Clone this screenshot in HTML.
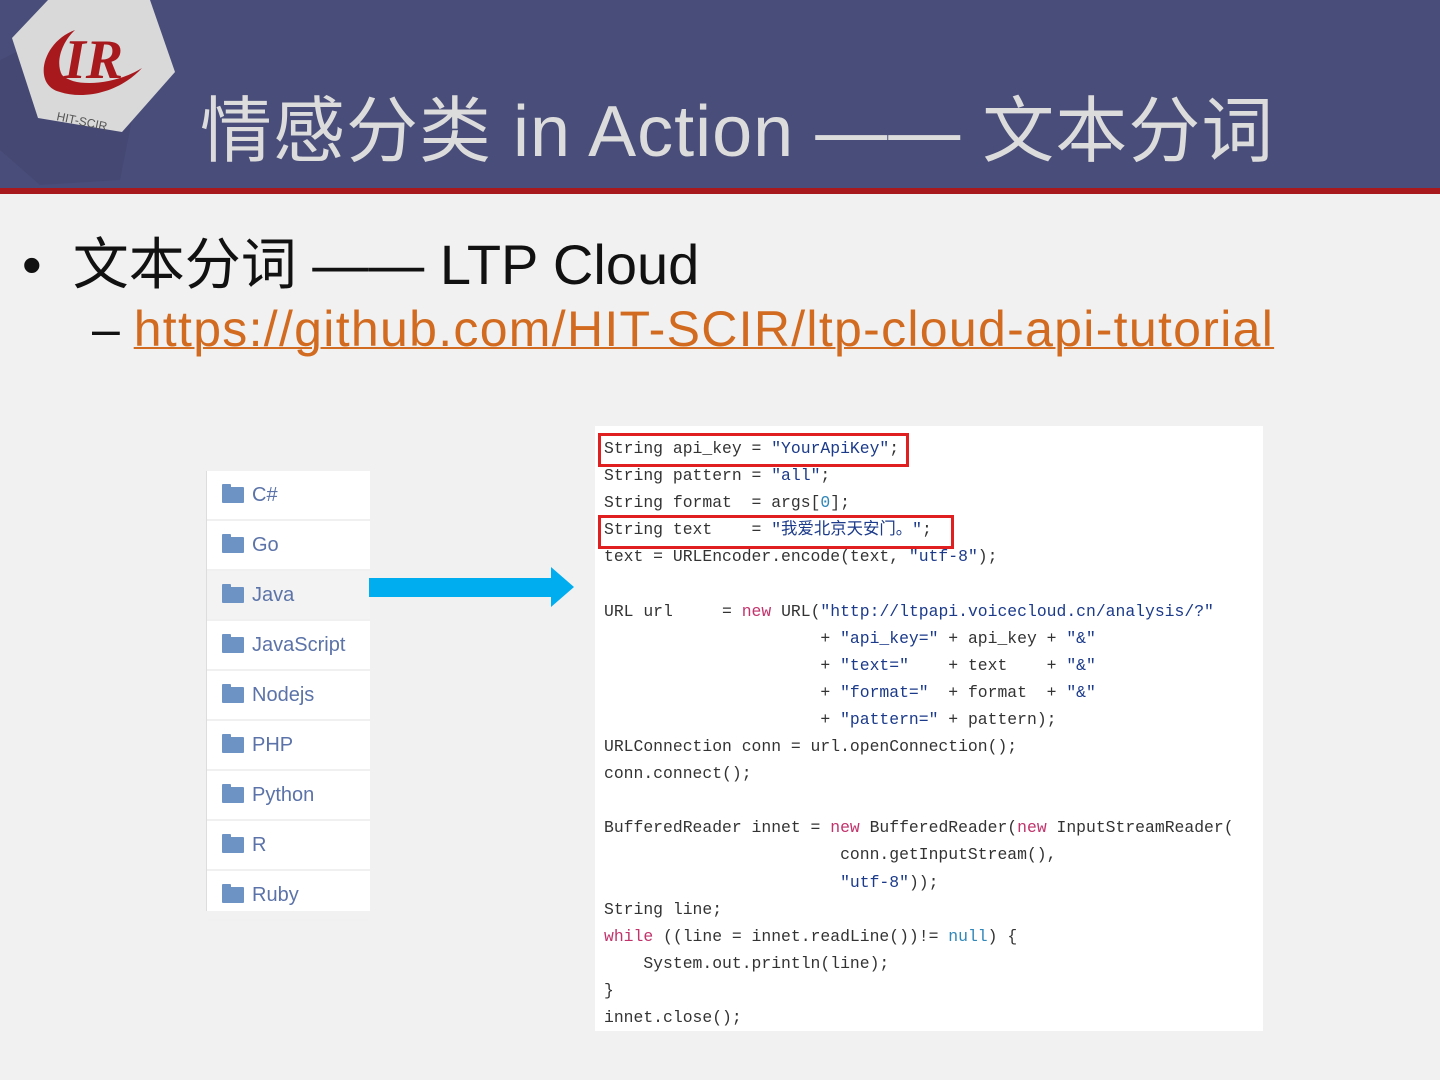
<!DOCTYPE html>
<html><head><meta charset="utf-8"><style>
body{margin:0;width:1440px;height:1080px;background:#f1f1f1;position:relative;overflow:hidden;font-family:"Liberation Sans","Noto Sans CJK SC",sans-serif}
.hdr{position:absolute;left:0;top:0;width:1440px;height:188px;background:#494d79}
.red{position:absolute;left:0;top:188px;width:1440px;height:6px;background:#a8191e}
.title{position:absolute;left:200px;top:72px;font-size:72px;color:#dcdcdc;white-space:nowrap;letter-spacing:1px}
.b1{position:absolute;left:22px;top:220px;font-size:56px;color:#111;white-space:nowrap}
.b2{position:absolute;left:92px;top:300px;font-size:50px;color:#111;white-space:nowrap}
.b2 a{color:#d26b1f;text-decoration:underline;text-decoration-thickness:2px;letter-spacing:1.3px}
.list{position:absolute;left:206px;top:471px;width:163px;height:440px;background:#fff;border-left:1px solid #ddd}
.it{height:48px;border-bottom:2px solid #f0f0f0;display:flex;align-items:center;padding-left:15px;font-size:20px;color:#5b73a8}
.it.sel{background:#f3f3f3}
.fd{width:22px;height:16px;background:#6d92c4;border-radius:1px;margin-right:8px;position:relative;top:0}
.fd:before{content:"";position:absolute;left:0;top:-3px;width:9px;height:4px;background:#6d92c4;border-radius:1px 1px 0 0}
.arrow{position:absolute;left:369px;top:567px}
.code{position:absolute;left:595px;top:426px;width:668px;height:605px;background:#fff}
pre{margin:0;position:absolute;left:9px;top:9px;font-family:"Liberation Mono","Noto Sans CJK SC",monospace;font-size:16.4px;line-height:27.1px;color:#333}
.s{color:#1b3a8a}.k{color:#c2336b}.n{color:#2f86b8}
.box{position:absolute;border:3px solid #e02020}
</style></head><body>
<div class="hdr"></div>
<svg style="position:absolute;left:0;top:0" width="200" height="190">
<polygon points="0,60 120,0 150,30 120,180 40,185 0,150" fill="#42466f" opacity=".6"/>
<polygon points="12,38 48,0 150,0 175,72 122,132 38,118" fill="#d9d9d9"/>
<path d="M75,30 C42,42 32,85 60,92 C85,100 120,92 142,68 C115,85 75,88 62,75 C55,62 62,42 75,30Z" fill="#a8191e"/>
<text x="64" y="78" font-family="Liberation Serif" font-style="italic" font-weight="bold" font-size="56" fill="#a8191e">IR</text>
<text x="56" y="120" font-family="Liberation Sans" font-size="12" fill="#555" transform="rotate(12 56 120)">HIT-SCIR</text>
</svg>
<div class="red"></div>
<div class="title">情感分类 in Action —— 文本分词</div>
<div class="b1">• &nbsp;文本分词 —— LTP Cloud</div>
<div class="b2">– <a>https://github.com/HIT-SCIR/ltp-cloud-api-tutorial</a></div>
<div class="list">
<div class="it"><span class="fd"></span>C#</div>
<div class="it"><span class="fd"></span>Go</div>
<div class="it sel"><span class="fd"></span>Java</div>
<div class="it"><span class="fd"></span>JavaScript</div>
<div class="it"><span class="fd"></span>Nodejs</div>
<div class="it"><span class="fd"></span>PHP</div>
<div class="it"><span class="fd"></span>Python</div>
<div class="it"><span class="fd"></span>R</div>
<div class="it"><span class="fd"></span>Ruby</div>
</div>
<svg class="arrow" width="206" height="42"><polygon points="0,11 182,11 182,0 205,20 182,40 182,30 0,30" fill="#00aeef"/></svg>
<div class="code">
<pre>String api_key = <span class="s">"YourApiKey"</span>;
String pattern = <span class="s">"all"</span>;
String format  = args[<span class="n">0</span>];
String text    = <span class="s">"我爱北京天安门。"</span>;
text = URLEncoder.encode(text, <span class="s">"utf-8"</span>);

URL url     = <span class="k">new</span> URL(<span class="s">"http://ltpapi.voicecloud.cn/analysis/?"</span>
                      + <span class="s">"api_key="</span> + api_key + <span class="s">"&amp;"</span>
                      + <span class="s">"text="</span>    + text    + <span class="s">"&amp;"</span>
                      + <span class="s">"format="</span>  + format  + <span class="s">"&amp;"</span>
                      + <span class="s">"pattern="</span> + pattern);
URLConnection conn = url.openConnection();
conn.connect();

BufferedReader innet = <span class="k">new</span> BufferedReader(<span class="k">new</span> InputStreamReader(
                        conn.getInputStream(),
                        <span class="s">"utf-8"</span>));
String line;
<span class="k">while</span> ((line = innet.readLine())!= <span class="n">null</span>) {
    System.out.println(line);
}
innet.close();</pre>
<div class="box" style="left:3px;top:7px;width:305px;height:28px"></div>
<div class="box" style="left:3px;top:89px;width:350px;height:28px"></div>
</div>
</body></html>
